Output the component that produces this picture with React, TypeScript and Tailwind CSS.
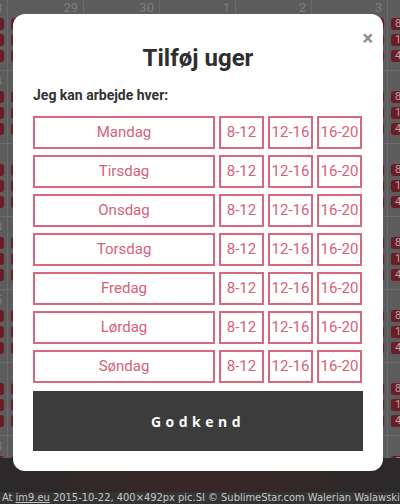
import React from "react";

const numbers = [
  ["28", "29", "30", "1", "2", "3", "4"],
  ["4", "5", "6", "7", "8", "9", "10"],
  ["11", "12", "13", "14", "15", "16", "17"],
  ["18", "19", "20", "21", "22", "23", "24"],
  ["25", "26", "27", "28", "29", "30", "31"],
  ["1", "2", "3", "4", "5", "6", "7"],
  ["8", "9", "10", "11", "12", "13", "14"],
];

const badges = ["8am - 12pm", "12pm - 4pm", "4pm - 8pm"];

function Cell({ n }: { n: string }) {
  return (
    <div className="w-[76px] h-[73px] shrink-0 border-r border-b border-[#6b6b6b] flex flex-col px-[3px]">
      <div className="h-[20px] text-right pr-[2px] text-[13px] leading-[20px] text-[#7c7c7c]">{n}</div>
      <div className="flex flex-col gap-[4px]">
        {badges.map((b) => (
          <div
            key={b}
            className="h-[12px] rounded-[3px] bg-[#6a1c27] text-[#b9a3a6] text-[11px] leading-[12px] pl-[4px] overflow-hidden whitespace-nowrap"
          >
            {b}
          </div>
        ))}
      </div>
    </div>
  );
}

function Slot({ label, wide }: { label: string; wide?: boolean }) {
  return (
    <div
      className={
        (wide ? "w-[182px]" : "w-[45px]") +
        " h-[33px] border-2 border-[#d66a7c] flex items-center justify-center text-[#d6617a] text-[15px]"
      }
    >
      {label}
    </div>
  );
}

const days = ["Mandag", "Tirsdag", "Onsdag", "Torsdag", "Fredag", "Lørdag", "Søndag"];

export default function App() {
  return (
    <div
      className="relative w-[400px] h-[504px] overflow-hidden bg-[#2a2828]"
      style={{ fontFamily: "Roboto, 'Noto Sans', sans-serif" }}
    >
      <div className="h-[458px] overflow-hidden bg-[#5c5c5c]">
        <div className="flex flex-col -ml-[68px] -mt-[2px]">
          {numbers.map((row, ri) => (
            <div key={ri} className="flex">
              {row.map((n, ci) => (
                <Cell key={ci} n={n} />
              ))}
            </div>
          ))}
        </div>
      </div>
      <div className="h-[34px] bg-gradient-to-r from-[#2b2929] via-[#3a2626] to-[#2b2929]" />
      <div
        className="h-[12px] bg-[#343434] flex justify-between items-center px-[2px] text-[11px] leading-[12px] text-[#c8c8c8] whitespace-nowrap"
        style={{ fontFamily: "'DejaVu Sans Condensed', 'DejaVu Sans', sans-serif" }}
      >
        <span>
          At <span className="underline">im9.eu</span> 2015-10-22, 400×492px pic.
        </span>
        <span>SI © SublimeStar.com Walerian Walawski</span>
      </div>

      <div className="absolute left-[13px] top-[14px] w-[370px] h-[457px] bg-white rounded-[12px] px-[20px] pt-[28px]">
        <button className="absolute right-[10px] top-[14px] text-[20px] leading-[20px] font-bold text-[#8a8a8a]">
          ×
        </button>
        <h1 className="text-center text-[24px] leading-[32px] font-bold text-[#2e2e2e]">Tilføj uger</h1>
        <p className="mt-[12px] text-[14px] leading-[18px] font-bold text-[#333]">Jeg kan arbejde hver:</p>
        <div className="mt-[12px] flex flex-col gap-[6px]">
          {days.map((d) => (
            <div key={d} className="flex justify-between w-[329px]">
              <Slot label={d} wide />
              <Slot label="8-12" />
              <Slot label="12-16" />
              <Slot label="16-20" />
            </div>
          ))}
        </div>
        <button
          className="mt-[8px] w-[330px] h-[60px] bg-[#3c3c3c] text-white text-[14px] font-bold tracking-[0.32em] flex items-center justify-center"
          style={{ fontFamily: "'Open Sans', sans-serif" }}
        >
          Godkend
        </button>
      </div>
    </div>
  );
}
